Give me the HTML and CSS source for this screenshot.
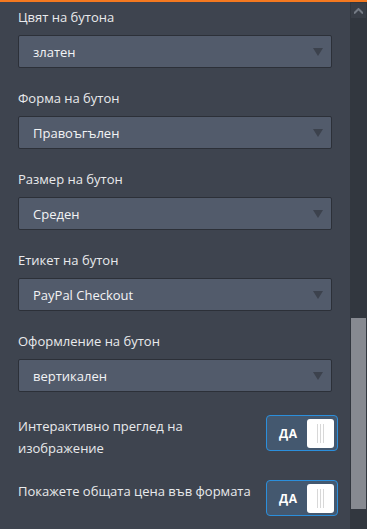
FILE: index.html
```html
<!doctype html>
<html>
<head>
    <title>PayPal бутон</title>
    <meta charset="utf-8">
    <link rel="stylesheet" href="styles.css">
</head>
<body>
    <div id="topline"></div>
    <div id="wrap">
        <div class="panel">
            <div class="field">
                <div class="label">Цвят на бутона</div>
                <div class="select"><span>златен</span><i class="caret"></i></div>
            </div>
            <div class="field">
                <div class="label">Форма на бутон</div>
                <div class="select"><span>Правоъгълен</span><i class="caret"></i></div>
            </div>
            <div class="field">
                <div class="label">Размер на бутон</div>
                <div class="select"><span>Среден</span><i class="caret"></i></div>
            </div>
            <div class="field">
                <div class="label">Етикет на бутон</div>
                <div class="select"><span>PayPal Checkout</span><i class="caret"></i></div>
            </div>
            <div class="field">
                <div class="label">Оформление на бутон</div>
                <div class="select"><span>вертикален</span><i class="caret"></i></div>
            </div>

            <div class="toggles">
                <div class="toggle-row">
                    <div class="toggle-text">Интерактивно преглед на изображение</div>
                    <div class="toggle">
                        <span>ДА</span>
                        <div class="knob"><b></b><b></b><b></b></div>
                    </div>
                </div>
                <div class="toggle-row">
                    <div class="toggle-text">Покажете общата цена във формата</div>
                    <div class="toggle">
                        <span>ДА</span>
                        <div class="knob"><b></b><b></b><b></b></div>
                    </div>
                </div>
            </div>
        </div>

        <!-- нарисуван скролбар -->
        <div class="scrollbar">
            <div class="scroll-up">
                <svg width="9" height="6" viewBox="0 0 9 6"><path d="M0 5.5 L4.5 1 L9 5.5" fill="none" stroke="#757b85" stroke-width="2"/></svg>
            </div>
            <div class="thumb"></div>
        </div>
    </div>
</body>
</html>
```

FILE: styles.css
```css
html, body {
    margin: 0;
    height: 100%;
    overflow: hidden;
}

body {
    background: #3e444f;
    font-family: "Open Sans", "Noto Sans", sans-serif;
    font-size: 13px;
    color: #e9eaec;
}

#topline {
    height: 2px;
    background: #f47920;
}

#wrap {
    display: flex;
    height: calc(100% - 2px);
}

.panel {
    flex: 1;
    padding: 5px 18px 0;
}

.field {
    margin-bottom: 20px;
}

.label {
    height: 20px;
    line-height: 20px;
    margin-bottom: 8px;
}

.select {
    display: flex;
    align-items: center;
    justify-content: space-between;
    height: 31px;
    padding: 0 8px 0 14px;
    background: #525b6b;
    border: 1px solid #2c3038;
    border-radius: 2px;
    color: #f2f3f5;
}

.caret {
    width: 0;
    height: 0;
    border-left: 5.5px solid transparent;
    border-right: 5.5px solid transparent;
    border-top: 8px solid #3c424d;
    margin-top: 1px;
}

.toggles {
    padding-top: 3px;
    margin-right: -6px;
}

.toggle-row {
    display: flex;
    align-items: flex-start;
    justify-content: space-between;
    margin-bottom: 21px;
}

.toggle-text {
    width: 248px;
    line-height: 22px;
}

.toggle {
    display: flex;
    align-items: center;
    box-sizing: border-box;
    width: 72px;
    height: 36px;
    padding: 0 3px 0 12px;
    background: #44586f;
    border: 1.5px solid #2b8fdc;
    border-radius: 4px;
}

.toggle span {
    flex: 1;
    font-weight: bold;
    font-size: 12px;
    color: #fff;
    letter-spacing: 0.5px;
}

.knob {
    display: flex;
    justify-content: center;
    align-items: center;
    gap: 2px;
    width: 27px;
    height: 29px;
    background: #fff;
    border-radius: 3px;
}

.knob b {
    width: 1px;
    height: 19px;
    background: #d8d8d8;
}

.scrollbar {
    width: 17px;
    background: #32373f;
    display: flex;
    flex-direction: column;
    align-items: center;
}

.scroll-up {
    width: 15px;
    height: 15px;
    margin-top: 1px;
    background: #393e47;
    display: flex;
    align-items: center;
    justify-content: center;
}

.thumb {
    width: 15px;
    height: 191px;
    margin-top: 300px;
    background: #878a91;
}
```
